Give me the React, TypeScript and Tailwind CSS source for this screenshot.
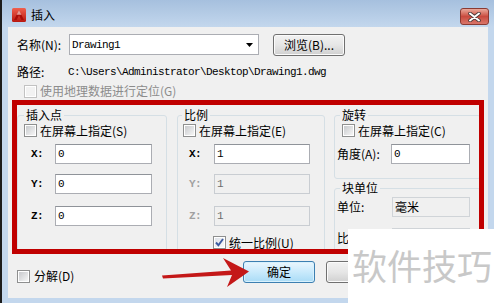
const cjk = "font-['Noto_Sans_CJK_SC',sans-serif]";
const mono = "font-['Liberation_Mono',monospace] text-[11px] tracking-[-0.6px]";

function CheckBox({ checked = false, disabled = false }: { checked?: boolean; disabled?: boolean }) {
  if (disabled) {
    return (
      <span className="flex h-[13px] w-[13px] shrink-0 border border-[#c2c2c2] bg-white p-px">
        <span className="flex-1 bg-[#f2f2f2]" />
      </span>
    );
  }
  return (
    <span className="flex h-[13px] w-[13px] shrink-0 border border-[#8e8f8f] bg-white p-px">
      <span
        className={
          checked
            ? "flex flex-1 items-center justify-center bg-linear-to-br from-[#dfe3ea] to-[#f8f8f8]"
            : "flex flex-1 bg-linear-to-br from-[#c8cacd] to-[#f6f6f6]"
        }
      >
        {checked && (
          <svg width="9" height="9" viewBox="0 0 9 9">
            <path d="M1 4.5 L3.4 7.2 L8 1" fill="none" stroke="#3b5aa0" strokeWidth="1.9" />
          </svg>
        )}
      </span>
    </span>
  );
}

function Field({ value, className, disabled = false }: { value: string; className: string; disabled?: boolean }) {
  return (
    <div
      className={
        disabled
          ? `flex h-[20px] items-center border border-[#c9cdd2] bg-[#f0f0f0] pl-[2px] text-[#6d6d6d] ${className}`
          : `flex h-[20px] items-center border border-[#abadb3] border-t-[#8f9399] bg-white pl-[2px] text-black ${className}`
      }
    >
      <span className={mono}>{value}</span>
    </div>
  );
}

function Button({ label, primary = false, className }: { label?: string; primary?: boolean; className: string }) {
  return (
    <div
      className={
        primary
          ? `flex h-[22px] items-center justify-center rounded-[3px] border border-[#3c7fb1] bg-linear-to-b from-[#eaf6fd] via-[#c9eafc] to-[#a9dbf6] shadow-[inset_0_0_0_1px_#d8f1fd] ${className}`
          : `flex h-[22px] items-center justify-center rounded-[3px] border border-[#707070] bg-linear-to-b from-[#f2f2f2] via-[#e6e6e6] to-[#d0d0d0] shadow-[inset_0_0_0_1px_#fbfbfb] ${className}`
      }
    >
      {label}
    </div>
  );
}

function AcadIcon() {
  return (
    <svg width="14" height="14" viewBox="0 0 14 14">
      <defs>
        <linearGradient id="acad" x1="0" y1="0" x2="0" y2="1">
          <stop offset="0" stopColor="#f0604e" />
          <stop offset="1" stopColor="#b8170f" />
        </linearGradient>
      </defs>
      <rect x="0" y="0" width="14" height="14" rx="1.5" fill="url(#acad)" />
      <path d="M7 2 L12 12 L9.4 12 L7 7.3 L4.6 12 L2 12 Z" fill="#a80c08" />
      <path d="M7 2 L9.4 6.8 L4.6 6.8 Z" fill="#ffd6cf" opacity="0.7" />
    </svg>
  );
}

function CloseButton() {
  return (
    <div className="mt-[4px] flex h-[17px] w-[29px] items-center justify-center self-start rounded-[3px] border border-[#8a3a32] bg-linear-to-b from-[#e9a99c] via-[#c94a3e] to-[#d9766a]">
      <svg width="13" height="10" viewBox="0 0 13 10">
        <path d="M2 1.5 L11 8.5 M11 1.5 L2 8.5" stroke="#4a3a3a" strokeWidth="3.6" strokeLinecap="round" />
        <path d="M2 1.5 L11 8.5 M11 1.5 L2 8.5" stroke="#ffffff" strokeWidth="2" strokeLinecap="round" />
      </svg>
    </div>
  );
}

export default function App() {
  return (
    <div className={`relative h-[303px] w-[494px] overflow-hidden border-l-2 border-[#1c1c1c] bg-[#c3d7ed] text-[12px] leading-[16px] text-black ${cjk}`}>
      {/* title bar */}
      <div className="flex h-[27px] items-center bg-linear-to-b from-[#a6c0de] to-[#c3d7ed] pl-[10px] pr-[5px] pt-[2px]">
        <AcadIcon />
        <span className="ml-[5px] text-[12px]">插入</span>
        <div className="ml-auto flex">
          <CloseButton />
        </div>
      </div>

      {/* dialog body */}
      <div className="ml-[6px] flex h-[271px] w-[480px] flex-col bg-[#f0f0f0]">
        <div className="mt-[7px] flex h-[21px] items-center pl-[9px]">
          <span className="w-[52px]">名称(N):</span>
          <div className="flex h-[21px] w-[190px] items-center border border-[#abadb3] bg-white pl-[2px]">
            <span className={mono}>Drawing1</span>
            <svg className="ml-auto mr-[5px]" width="7" height="4" viewBox="0 0 7 4">
              <path d="M0 0 L7 0 L3.5 4 Z" fill="#000" />
            </svg>
          </div>
          <Button label="浏览(B)..." className="ml-[14px] h-[18px] w-[72px]" />
        </div>

        <div className="mt-[9px] flex h-[16px] items-center pl-[9px]">
          <span className="w-[51px]">路径:</span>
          <span className={mono}>C:\Users\Administrator\Desktop\Drawing1.dwg</span>
        </div>

        <div className="mt-[4px] flex h-[14px] items-center pl-[16px]">
          <CheckBox disabled />
          <span className="ml-[3px] text-[#8c8c8c]">使用地理数据进行定位(G)</span>
        </div>

        <div className="mt-[9px] flex h-[146px] pl-[9px]">
          <fieldset className="h-[146px] w-[150px] rounded-[3px] border border-[#d5dfe5]">
            <legend className="ml-[6px] px-[2px] leading-[16px]">插入点</legend>
            <div className="mt-[1px] flex h-[13px] items-center pl-[6px]">
              <CheckBox />
              <span className="ml-[3px]">在屏幕上指定(S)</span>
            </div>
            <div className="mt-[7px] flex h-[20px] items-center pl-[13px]">
              <span className={`w-[24px] font-bold ${mono}`}>X:</span>
              <Field value="0" className="w-[97px]" />
            </div>
            <div className="mt-[10px] flex h-[20px] items-center pl-[13px]">
              <span className={`w-[24px] font-bold ${mono}`}>Y:</span>
              <Field value="0" className="w-[97px]" />
            </div>
            <div className="mt-[12px] flex h-[20px] items-center pl-[13px]">
              <span className={`w-[24px] font-bold ${mono}`}>Z:</span>
              <Field value="0" className="w-[97px]" />
            </div>
          </fieldset>

          <fieldset className="ml-[10px] h-[146px] w-[148px] rounded-[3px] border border-[#d5dfe5]">
            <legend className="ml-[4px] px-[2px] leading-[16px]">比例</legend>
            <div className="mt-[1px] flex h-[13px] items-center pl-[5px]">
              <CheckBox />
              <span className="ml-[3px]">在屏幕上指定(E)</span>
            </div>
            <div className="mt-[7px] flex h-[20px] items-center pl-[11px]">
              <span className={`w-[25px] font-bold ${mono}`}>X:</span>
              <Field value="1" className="w-[96px]" />
            </div>
            <div className="mt-[10px] flex h-[20px] items-center pl-[11px]">
              <span className={`w-[25px] font-bold text-[#a0a0a0] ${mono}`}>Y:</span>
              <Field value="1" disabled className="w-[96px]" />
            </div>
            <div className="mt-[12px] flex h-[20px] items-center pl-[11px]">
              <span className={`w-[25px] font-bold text-[#a0a0a0] ${mono}`}>Z:</span>
              <Field value="1" disabled className="w-[96px]" />
            </div>
            <div className="mt-[10px] flex h-[13px] items-center pl-[35px]">
              <CheckBox checked />
              <span className="ml-[3px]">统一比例(U)</span>
            </div>
          </fieldset>

          <div className="ml-[9px] flex w-[147px] flex-col">
            <fieldset className="h-[72px] rounded-[3px] border border-[#d5dfe5]">
              <legend className="ml-[5px] px-[2px] leading-[16px]">旋转</legend>
              <div className="mt-[1px] flex h-[13px] items-center pl-[7px]">
                <CheckBox />
                <span className="ml-[3px]">在屏幕上指定(C)</span>
              </div>
              <div className="mt-[7px] flex h-[20px] items-center pl-[2px]">
                <span className="w-[54px]">角度(A):</span>
                <Field value="0" className="w-[79px]" />
              </div>
            </fieldset>
            <fieldset className="mt-[1px] h-[73px] rounded-[3px] border border-[#d5dfe5]">
              <legend className="ml-[5px] px-[2px] leading-[16px]">块单位</legend>
              <div className="mt-[1px] flex h-[20px] items-center pl-[2px]">
                <span className="w-[55px]">单位:</span>
                <div className="flex h-[20px] w-[78px] items-center border border-[#d0d4d8] bg-[#f0f0f0] pl-[2px]">毫米</div>
              </div>
              <div className="mt-[11px] flex h-[20px] items-center pl-[2px]">
                <span className="w-[55px]">比例:</span>
                <div className="h-[20px] w-[78px] border border-[#d0d4d8] bg-[#f0f0f0]" />
              </div>
            </fieldset>
          </div>
        </div>

        <div className="mt-[8px] flex h-[22px] items-start pl-[9px]">
          <div className="mt-[7px] flex w-[226px] items-center">
            <CheckBox />
            <span className="ml-[4px]">分解(D)</span>
          </div>
          <Button label="确定" primary className="w-[72px]" />
          <Button className="ml-[11px] w-[72px]" />
        </div>
      </div>

      {/* annotation: red frame */}
      <div className="absolute left-[10px] top-[100px] h-[154px] w-[472px] border-[5px] border-[#c00000]" />

      {/* annotation: red arrow */}
      <svg className="absolute left-[155px] top-[255px]" width="95" height="35" viewBox="155 255 95 35">
        <path
          d="M160 275.5 L229 270.5 L221 258 L247 271.5 L225 287 L230 275 L161 278.5 Z"
          fill="#c41818"
        />
      </svg>

      {/* watermark */}
      <div className="absolute bottom-0 left-[346px] right-0 top-[229px] bg-white pl-[4px] pt-[18px]">
        <span className="text-[35px] leading-[35px] text-[#c8c8c8]">软件技巧</span>
      </div>
    </div>
  );
}
